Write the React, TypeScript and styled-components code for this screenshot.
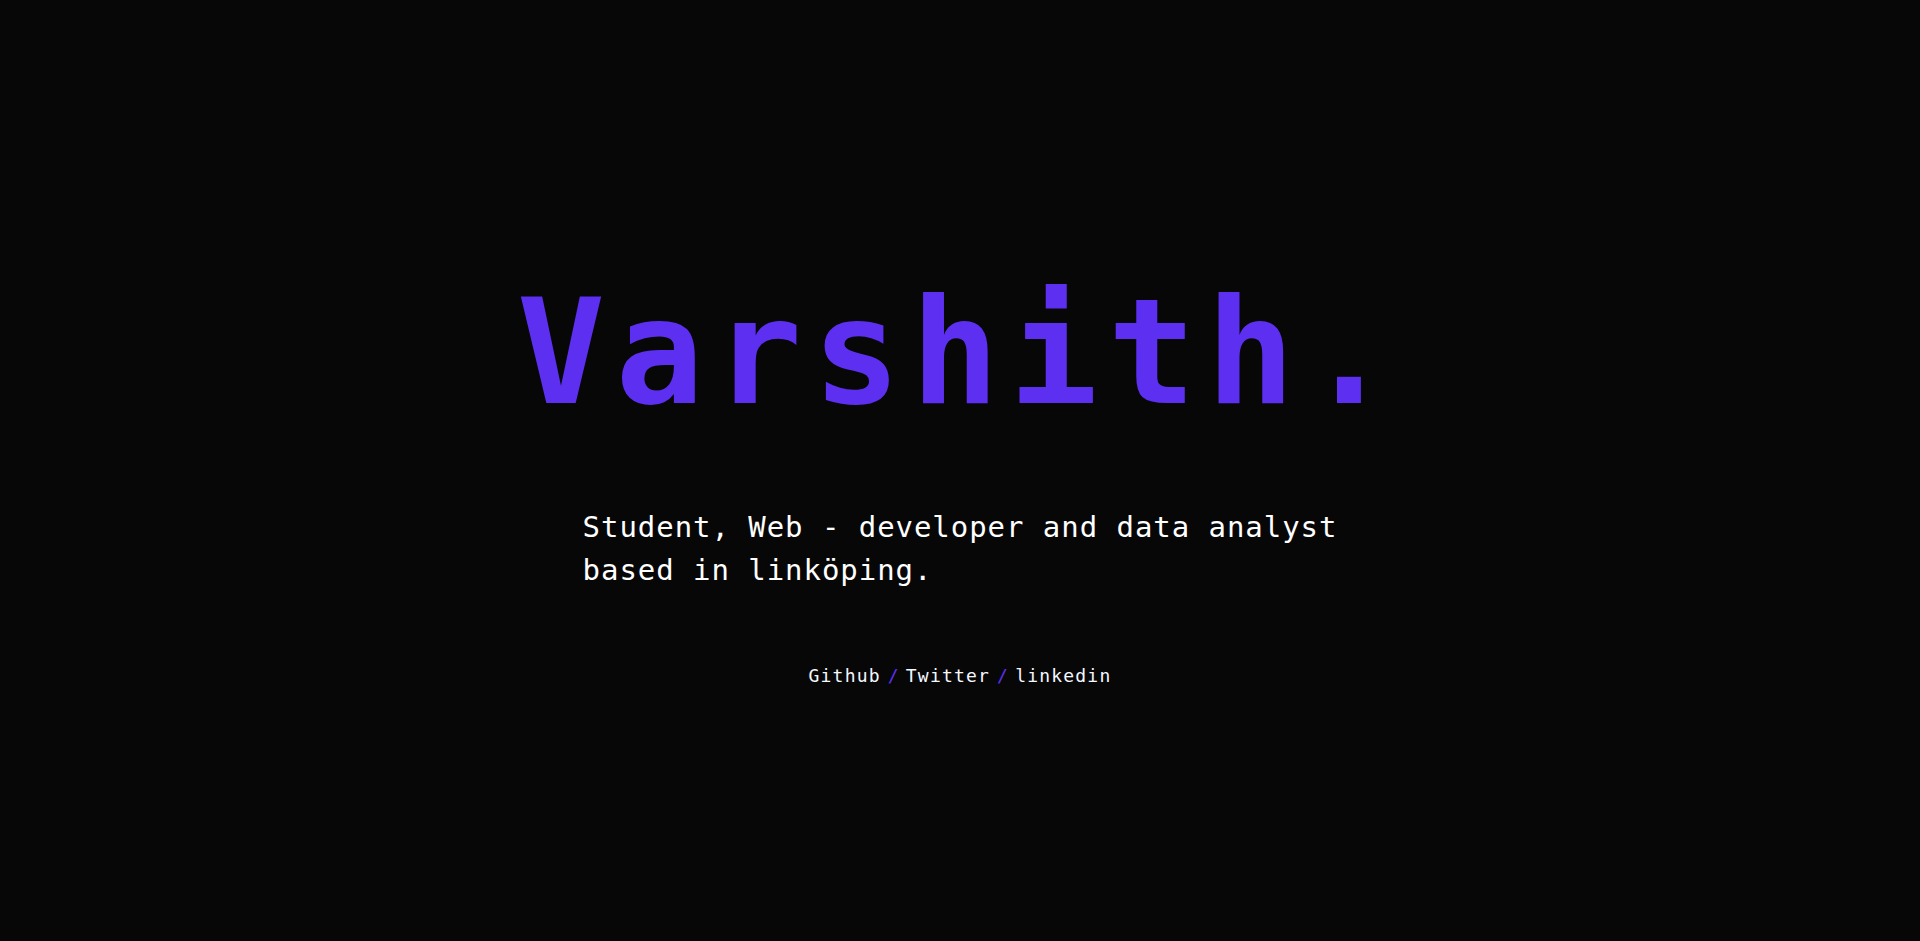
import React from "react";
import styled, { createGlobalStyle } from "styled-components";

const GlobalStyle = createGlobalStyle`
  html, body {
    margin: 0;
    padding: 0;
    background: #070707;
  }
  body {
    font-family: "DejaVu Sans Mono", "Liberation Mono", monospace;
    color: #ffffff;
  }
`;

const Page = styled.main`
  min-height: 100vh;
  box-sizing: border-box;
  padding-top: 279px;
  display: flex;
  flex-direction: column;
  align-items: center;
  background: #070707;
`;

const Title = styled.h1`
  margin: 0;
  font-family: "DejaVu Sans Mono", "Liberation Mono", monospace;
  font-weight: 700;
  font-size: 147px;
  line-height: 1;
  letter-spacing: 10px;
  color: #5c2ff1;
`;

const Tagline = styled.p`
  margin: 80px 0 0;
  width: fit-content;
  text-align: left;
  font-size: 29px;
  line-height: 43px;
  letter-spacing: 0.95px;
  color: #ffffff;
`;

const Links = styled.nav`
  margin-top: 72px;
  display: flex;
  align-items: center;
  font-size: 18px;
  line-height: 24px;
  letter-spacing: 1.2px;
`;

const Link = styled.a`
  color: #f4f8ff;
  text-decoration: none;
`;

const Sep = styled.span`
  color: #5c2ff1;
  margin: 0 6px 0 7px;
`;

export default function App() {
  return (
    <>
      <GlobalStyle />
      <Page>
        <Title>Varshith.</Title>
        <Tagline>
          Student, Web - developer and data analyst
          <br />
          based in linköping.
        </Tagline>
        <Links>
          <Link href="#">Github</Link>
          <Sep>/</Sep>
          <Link href="#">Twitter</Link>
          <Sep>/</Sep>
          <Link href="#">linkedin</Link>
        </Links>
      </Page>
    </>
  );
}
